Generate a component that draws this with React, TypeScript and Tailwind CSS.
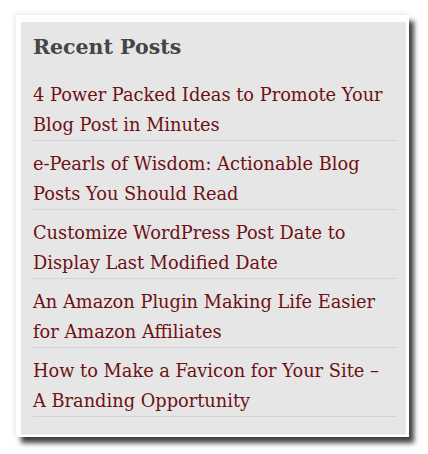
const posts = [
  ["4 Power Packed Ideas to Promote Your", "Blog Post in Minutes"],
  ["e-Pearls of Wisdom: Actionable Blog", "Posts You Should Read"],
  ["Customize WordPress Post Date to", "Display Last Modified Date"],
  ["An Amazon Plugin Making Life Easier", "for Amazon Affiliates"],
  ["How to Make a Favicon for Your Site –", "A Branding Opportunity"],
];

export default function App() {
  return (
    <div className="h-[454px] w-[428px] bg-white pl-[16px] pt-[15px] font-['DejaVu_Serif',Georgia,serif]">
      {/* frame with the screenshot shadow */}
      <div className="w-[393px] bg-white pb-[2px] pl-[5px] pr-[3px] pt-[7px] shadow-[5px_6px_5px_rgba(0,0,0,0.75),-1px_-1px_6px_rgba(0,0,0,0.1)]">
        <div className="h-[413px] border-b border-dotted border-[#f6f6f6] bg-[#e6e6e6] pl-[12px] pr-[9px] pt-[10px]">
          <h2 className="text-[20.5px] font-bold leading-[30px] text-[#454545]">Recent Posts</h2>
          <ul className="mt-[10px]">
            {posts.map((p) => (
              <li key={p[0]} className="whitespace-nowrap border-b border-[#d3d3d3] pt-[8px]">
                <a href="#" className="text-[17.8px] leading-[30px] text-[#6e1014]">
                  {p[0]}
                  <br />
                  {p[1]}
                </a>
              </li>
            ))}
          </ul>
        </div>
      </div>
    </div>
  );
}
